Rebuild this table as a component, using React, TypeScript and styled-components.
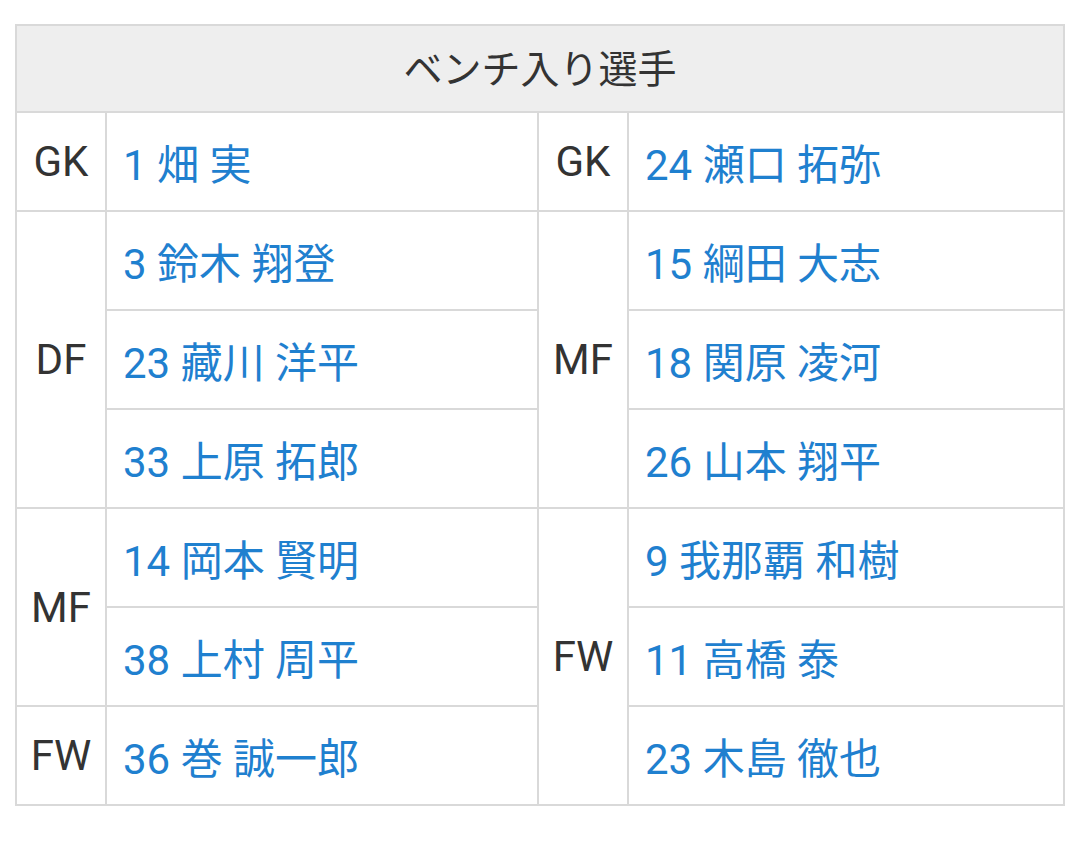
import styled, { createGlobalStyle } from "styled-components";

const GlobalStyle = createGlobalStyle`
  body {
    margin: 0;
    background: #ffffff;
    font-family: Roboto, "Noto Sans CJK JP", sans-serif;
  }
`;

const Page = styled.main`
  padding: 24px 0 0 15px;
`;

const BenchGrid = styled.section`
  display: grid;
  width: 1050px;
  grid-template-columns: 88px 430px 88px 434px;
  grid-template-rows: 85px repeat(7, 97px);
  gap: 2px;
  padding: 2px;
  box-sizing: border-box;
  background: #d9d9d9;
`;

const Title = styled.h2`
  grid-column: 1 / -1;
  margin: 0;
  padding-bottom: 5px;
  display: flex;
  align-items: center;
  justify-content: center;
  background: #eeeeee;
  color: #333333;
  font-size: 39px;
  font-weight: 400;
`;

const Cell = styled.div<{ $col: number; $row: number; $span?: number }>`
  grid-column: ${(p) => p.$col};
  grid-row: ${(p) => p.$row + 1} / span ${(p) => p.$span ?? 1};
  display: flex;
  align-items: center;
  background: #ffffff;
  font-size: 42px;
`;

const Position = styled(Cell)`
  justify-content: center;
  color: #333333;
`;

const Player = styled(Cell)`
  padding-left: 16px;
  color: #1f80cf;
  white-space: nowrap;
`;

type Group = { pos: string; players: string[] };

const left: Group[] = [
  { pos: "GK", players: ["1 畑 実"] },
  { pos: "DF", players: ["3 鈴木 翔登", "23 藏川 洋平", "33 上原 拓郎"] },
  { pos: "MF", players: ["14 岡本 賢明", "38 上村 周平"] },
  { pos: "FW", players: ["36 巻 誠一郎"] },
];

const right: Group[] = [
  { pos: "GK", players: ["24 瀬口 拓弥"] },
  { pos: "MF", players: ["15 綱田 大志", "18 関原 凌河", "26 山本 翔平"] },
  { pos: "FW", players: ["9 我那覇 和樹", "11 高橋 泰", "23 木島 徹也"] },
];

const renderSide = (groups: Group[], col: number) => {
  let row = 1;
  return groups.map((g) => {
    const start = row;
    row += g.players.length;
    return [
      <Position key={`${col}-${g.pos}`} $col={col} $row={start} $span={g.players.length}>
        {g.pos}
      </Position>,
      ...g.players.map((name, i) => (
        <Player key={`${col}-${name}`} $col={col + 1} $row={start + i}>
          {name}
        </Player>
      )),
    ];
  });
};

const App = () => {
  return (
    <Page>
      <GlobalStyle />
      <BenchGrid>
        <Title>ベンチ入り選手</Title>
        {renderSide(left, 1)}
        {renderSide(right, 3)}
      </BenchGrid>
    </Page>
  );
};

export default App;
